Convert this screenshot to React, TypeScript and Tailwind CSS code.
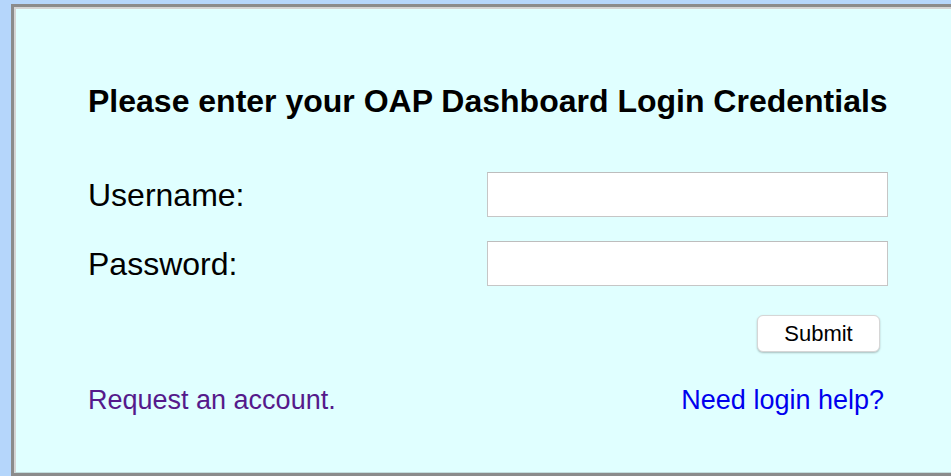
import { useState } from 'react'

const sans = { fontFamily: '"Liberation Sans", Arial, sans-serif' }

function Field({ label, type }: { label: string; type: string }) {
  const [value, setValue] = useState('')

  return (
    <div className="flex h-[45px] items-center">
      <label className="w-[399px] pt-[3px] text-[32px] leading-[1.117] text-black">{label}</label>
      <input
        type={type}
        value={value}
        onChange={(e) => setValue(e.target.value)}
        className="h-[45px] w-[401px] border border-[#c6c6c6] border-t-[#bdbdbd] bg-white px-2 text-[20px] outline-none"
      />
    </div>
  )
}

export default function App() {
  return (
    <div className="h-[476px] overflow-hidden bg-[#b5d6fb] pl-[11px] pt-[4px]" style={sans}>
      <div className="flex h-[472px] w-[960px] flex-col border-b-[3px] border-l-[3px] border-t-[3px] border-[#8b8b8b]">
        <div className="flex-1 border-b border-l-2 border-t-2 border-[#d4d4d4] border-b-[#c2dddd] bg-[#e0ffff] pl-[72px] pt-[75px]">
          <div className="w-[800px]">
            <h1 className="text-[32px] font-bold leading-[1.117] text-black">
              Please enter your OAP Dashboard Login Credentials
            </h1>

            <div className="mt-[52px] flex flex-col gap-[24px]">
              <Field label="Username:" type="text" />
              <Field label="Password:" type="password" />
            </div>

            <div className="mr-[8px] mt-[29px] flex justify-end">
              <button className="h-[37px] w-[123px] rounded-[6px] border border-[#d6d6d6] bg-white text-[22px] text-black shadow-[0_1px_2px_rgba(0,0,0,0.25)]">
                Submit
              </button>
            </div>

            <div className="mr-[4px] mt-[33px] flex justify-between text-[27px] leading-[1.117]">
              <a href="#" className="text-[#551a8b]">
                Request an account.
              </a>
              <a href="#" className="text-[#0000ee]">
                Need login help?
              </a>
            </div>
          </div>
        </div>
      </div>
    </div>
  )
}
